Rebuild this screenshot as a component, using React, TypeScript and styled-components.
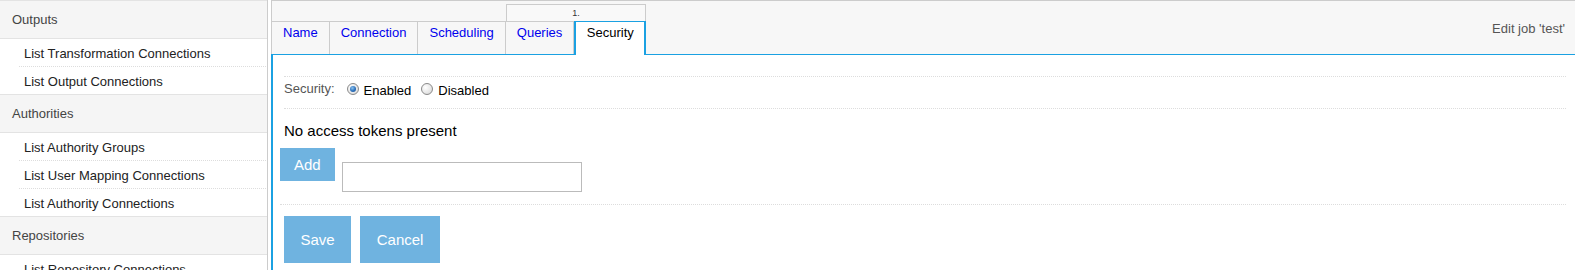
import React from 'react';
import styled, { createGlobalStyle } from 'styled-components';

const GlobalStyle = createGlobalStyle`
    html, body {
        margin: 0;
        padding: 0;
        background: #fff;
    }
    body {
        font-family: "Liberation Sans", Arial, sans-serif;
        font-size: 13px;
        height: 270px;
        overflow: hidden;
    }
`;

const accent = '#1ba1e2';
const buttonBlue = '#6fb3e0';

interface NavSection {
    title: string;
    items: string[];
}

const sections: NavSection[] = [
    { title: 'Outputs', items: ['List Transformation Connections', 'List Output Connections'] },
    { title: 'Authorities', items: ['List Authority Groups', 'List User Mapping Connections', 'List Authority Connections'] },
    { title: 'Repositories', items: ['List Repository Connections'] },
];

const Radio: React.FC<{ checked?: boolean; label: string }> = ({ checked, label }) => (
    <RadioOption>
        <RadioMark $checked={checked} />
        {label}
    </RadioOption>
);

export default function App() {
    return (
        <>
            <GlobalStyle />
            <Page>
                <Sidebar>
                    {sections.map((section) => (
                        <div key={section.title}>
                            <SectionHeading>{section.title}</SectionHeading>
                            {section.items.map((item) => (
                                <NavItem key={item}>{item}</NavItem>
                            ))}
                        </div>
                    ))}
                </Sidebar>
                <Main>
                    <Header>
                        <Tabs>
                            <Tab>Name</Tab>
                            <Tab>Connection</Tab>
                            <Tab>Scheduling</Tab>
                            <TabGroup>
                                <GroupLabel>1.</GroupLabel>
                                <Tabs>
                                    <Tab>Queries</Tab>
                                    <Tab $active>Security</Tab>
                                </Tabs>
                            </TabGroup>
                        </Tabs>
                        <Title>Edit job 'test'</Title>
                    </Header>
                    <Content>
                        <FormRow>
                            <FieldLabel>Security:</FieldLabel>
                            <Radio checked label="Enabled" />
                            <Radio label="Disabled" />
                        </FormRow>
                        <Message>No access tokens present</Message>
                        <AddRow>
                            <Button $size="small">Add</Button>
                            <TokenInput type="text" />
                        </AddRow>
                        <Actions>
                            <Button>Save</Button>
                            <Button>Cancel</Button>
                        </Actions>
                    </Content>
                </Main>
            </Page>
        </>
    );
}

const Page = styled.div`
    display: flex;
    height: 270px;
    overflow: hidden;
`;
const Sidebar = styled.nav`
    width: 267px;
    flex-shrink: 0;
    border-right: 1px solid #ccc;
    overflow: hidden;
`;
const SectionHeading = styled.div`
    height: 37px;
    line-height: 38px;
    padding-left: 12px;
    background: #f5f5f5;
    border-top: 1px solid #e3e3e3;
    border-bottom: 1px solid #e3e3e3;
    color: #444;
`;
const NavItem = styled.div`
    height: 27px;
    line-height: 29px;
    margin: 0 1px 0 19px;
    padding-left: 5px;
    color: #222;
    white-space: nowrap;
    overflow: hidden;

    & + & {
        border-top: 1px dotted #ddd;
    }
`;
const Main = styled.main`
    flex: 1;
    min-width: 0;
    margin-left: 3px;
    display: flex;
    flex-direction: column;
`;
const Header = styled.header`
    display: flex;
    align-items: flex-end;
    height: 53px;
    padding-right: 10px;
    background: #f7f7f7;
    border-top: 1px solid #ccc;
    border-left: 1px solid #ccc;
`;
const Tabs = styled.div`
    display: flex;
    align-items: flex-end;
`;
const TabGroup = styled.div`
    display: flex;
    flex-direction: column;
`;
const GroupLabel = styled.div`
    height: 16px;
    line-height: 16px;
    border: 1px solid #ccc;
    border-bottom: none;
    background: #f9f9f9;
    color: #333;
    font-size: 9px;
    text-align: center;
`;
const Tab = styled.div<{ $active?: boolean }>`
    box-sizing: border-box;
    height: ${({ $active }) => ($active ? '34px' : '33px')};
    margin-bottom: ${({ $active }) => ($active ? '-1px' : '0')};
    padding: 3px ${({ $active }) => ($active ? '10.5px' : '11px')} 0;
    line-height: 15px;
    white-space: nowrap;
    color: ${({ $active }) => ($active ? '#000' : '#0000ee')};
    background: ${({ $active }) => ($active ? '#fff' : 'transparent')};
    border-top: 1px solid ${({ $active }) => ($active ? accent : '#ccc')};
    border-right: ${({ $active }) => ($active ? `2px solid ${accent}` : '1px solid #ccc')};
    border-left: ${({ $active }) => ($active ? `2px solid ${accent}` : 'none')};
    position: ${({ $active }) => ($active ? 'relative' : 'static')};
    z-index: ${({ $active }) => ($active ? 1 : 'auto')};
`;
const Title = styled.div`
    margin-left: auto;
    align-self: flex-start;
    margin-top: 20px;
    line-height: 15px;
    color: #555;
`;
const Content = styled.section`
    flex: 1;
    padding: 21px 9px 0 11px;
    background: #fff;
    border-left: 2px solid ${accent};
    border-top: 1px solid ${accent};
`;
const FormRow = styled.div`
    display: flex;
    align-items: flex-start;
    height: 31px;
    border-top: 1px dotted #ddd;
    border-bottom: 1px dotted #ddd;
`;
const FieldLabel = styled.span`
    margin: 4px 12px 0 0;
    line-height: 15px;
    color: #555;
`;
const RadioOption = styled.label`
    display: flex;
    align-items: center;
    gap: 5px;
    margin: 6px 10px 0 0;
    line-height: 15px;
    color: #000;
`;
const RadioMark = styled.span<{ $checked?: boolean }>`
    box-sizing: border-box;
    display: flex;
    align-items: center;
    justify-content: center;
    width: 12px;
    height: 12px;
    margin-bottom: 3px;
    border-radius: 50%;
    border: 1px solid #8a8a8a;
    background: radial-gradient(circle at 35% 35%, #fff 0%, #e6e6e6 60%, #cfcfcf 100%);

    &::after {
        content: '';
        display: ${({ $checked }) => ($checked ? 'block' : 'none')};
        width: 6px;
        height: 6px;
        border-radius: 50%;
        background: radial-gradient(circle at 40% 35%, #8cc3ef 0%, #2a6fba 55%, #1b4f8f 100%);
    }
`;
const Message = styled.div`
    margin-top: 13px;
    font-size: 15px;
    line-height: 17px;
    color: #000;
`;
const AddRow = styled.div`
    display: flex;
    align-items: flex-start;
    margin: 9px 0 0 -4px;
    padding-bottom: 12px;
    border-bottom: 1px dotted #ddd;
`;
const Button = styled.button<{ $size?: 'small' }>`
    height: ${({ $size }) => ($size === 'small' ? '33px' : '47px')};
    padding: 0 ${({ $size }) => ($size === 'small' ? '14px' : '16.5px')};
    border: none;
    background: ${buttonBlue};
    color: #fff;
    font-family: "Liberation Sans", Arial, sans-serif;
    font-size: 15px;
    cursor: pointer;
`;
const TokenInput = styled.input`
    box-sizing: border-box;
    width: 240px;
    height: 30px;
    margin: 14px 0 0 7px;
    border: 1px solid #bbb;
    background: #fff;
`;
const Actions = styled.div`
    display: flex;
    gap: 9px;
    padding-top: 11px;
`;
